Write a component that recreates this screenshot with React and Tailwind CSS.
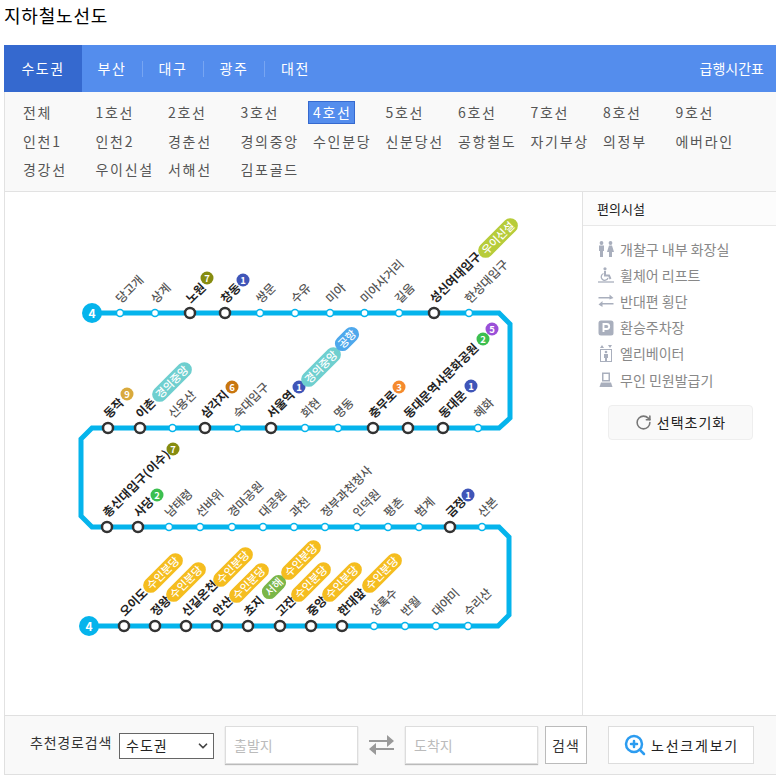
import { RotateCw, ZoomIn, ChevronDown } from 'lucide-react';

const tabs = ['부산', '대구', '광주', '대전'];

const lines = [
  '전체', '1호선', '2호선', '3호선', '4호선', '5호선', '6호선', '7호선', '8호선', '9호선',
  '인천1', '인천2', '경춘선', '경의중앙', '수인분당', '신분당선', '공항철도', '자기부상', '의정부', '에버라인',
  '경강선', '우이신설', '서해선', '김포골드',
];

const ROUTE = 'M92 313 H499 L510 324 V418 L499 428 H92 L81 439 V516 L92 527 H499 L509 537 V615 L498 626 H89';

// [name, x, transfer]
const rows = [
  { y: 313, stations: [['당고개', 120], ['상계', 155], ['노원', 190, 1], ['창동', 225, 1], ['쌍문', 260], ['수유', 295], ['미아', 330], ['미아사거리', 364.5], ['길음', 399], ['성신여대입구', 434, 1], ['한성대입구', 469]] },
  { y: 428, stations: [['동작', 108, 1], ['이촌', 140, 1], ['신용산', 172.5], ['삼각지', 205, 1], ['숙대입구', 237.5], ['서울역', 271, 1], ['회현', 305], ['명동', 338], ['충무로', 373, 1], ['동대문역사문화공원', 408, 1], ['동대문', 443, 1], ['혜화', 478]] },
  { y: 527, stations: [['총신대입구(이수)', 107, 1], ['사당', 138, 1], ['남태령', 169], ['선바위', 200], ['경마공원', 232], ['대공원', 263], ['과천', 294], ['정부과천청사', 325], ['인덕원', 357], ['평촌', 388], ['범계', 419], ['금정', 450, 1], ['산본', 482]] },
  { y: 626, stations: [['오이도', 124, 1], ['정왕', 155, 1], ['신길온천', 186, 1], ['안산', 217, 1], ['초지', 248, 1], ['고잔', 280, 1], ['중앙', 311, 1], ['한대앞', 342, 1], ['상록수', 374], ['반월', 405], ['대야미', 436], ['수리산', 468]] },
];

const dots = [
  ['7', 207, 278, '#868c10'], ['1', 243, 280, '#3f55b8'], ['2', 483, 339, '#3cbf50'], ['5', 492, 329, '#9a50d8'],
  ['9', 127, 394, '#d9aa3c'], ['6', 232, 387, '#c8760f'], ['1', 299, 387, '#3f55b8'], ['3', 399, 387, '#f58a2e'],
  ['1', 471, 386, '#3f55b8'], ['7', 173, 449, '#868c10'], ['2', 157, 495, '#3cbf50'], ['1', 468, 495, '#3f55b8'],
];

const pills = [
  ['우이신설', 498, 238, 50, '#b7cc3a'], ['경의중앙', 172, 382, 50, '#6fcfcf'], ['경의중앙', 321, 367, 50, '#6fcfcf'],
  ['공항', 347, 339, 28, '#4ea8ec'], ['수인분당', 163, 573, 50, '#f5bd1f'], ['수인분당', 186, 582, 50, '#f5bd1f'],
  ['수인분당', 233, 567, 50, '#f5bd1f'], ['수인분당', 249, 583, 50, '#f5bd1f'], ['서해', 274, 587, 28, '#7ab648'],
  ['수인분당', 301, 560, 50, '#f5bd1f'], ['수인분당', 311, 582, 50, '#f5bd1f'], ['수인분당', 342, 582, 50, '#f5bd1f'],
  ['수인분당', 382, 573, 50, '#f5bd1f'],
];

const facilities = [
  ['개찰구 내부 화장실', RestroomIcon],
  ['휠체어 리프트', WheelchairIcon],
  ['반대편 횡단', CrossIcon],
  ['환승주차장', ParkingIcon],
  ['엘리베이터', ElevatorIcon],
  ['무인 민원발급기', KioskIcon],
];

function RestroomIcon() {
  return (
    <svg width="16" height="16" viewBox="0 0 16 16" fill="#a9afbd">
      <circle cx="3.500" cy="2" r="1.900" />
      <circle cx="12.500" cy="2" r="1.900" />
      <path d="M1 4.500h5v5.500H5v6H2v-6H1z" />
      <path d="M11 4.500h3l2 6.500h-2v5h-3v-5H9z" />
    </svg>
  );
}

function WheelchairIcon() {
  return (
    <svg width="16" height="16" viewBox="0 0 16 16" fill="none" stroke="#a9afbd">
      <circle cx="7" cy="1.800" r="1.600" fill="#a9afbd" stroke="none" />
      <path d="M7 4v4.500h4l1.500 3.500" strokeWidth="2" />
      <path d="M5.500 6.500a3.500 3.500 0 1 0 4.500 4.500" strokeWidth="1.300" />
      <path d="M0 15h16" strokeWidth="1.300" />
    </svg>
  );
}

function CrossIcon() {
  return (
    <svg width="16" height="16" viewBox="0 0 16 16" fill="#a9afbd">
      <path d="M0.500 4h11V1.500L15.500 5l-4 1.500V5.500h-11z" />
      <path d="M15.500 10h-11V8L0.500 11.500 4.500 14v-2.500h11z" />
    </svg>
  );
}

function ParkingIcon() {
  return (
    <svg width="16" height="16" viewBox="0 0 16 16">
      <rect x="0.500" y="0.500" width="15" height="15" rx="2.500" fill="#a9afbd" />
      <path d="M5.500 12V4h3.200a2.400 2.400 0 0 1 0 5H5.500" fill="none" stroke="#fff" strokeWidth="1.900" />
    </svg>
  );
}

function ElevatorIcon() {
  return (
    <svg width="16" height="17" viewBox="0 0 16 17" fill="#a9afbd">
      <path d="M2 3l2-3 2 3zM10 0h4l-2 3z" />
      <rect x="2.500" y="4.500" width="11" height="12" fill="none" stroke="#a9afbd" />
      <circle cx="8" cy="7" r="1.300" />
      <path d="M6 9h4v4H9v3H7v-3H6z" />
    </svg>
  );
}

function KioskIcon() {
  return (
    <svg width="16" height="16" viewBox="0 0 16 16" fill="#a9afbd">
      <path d="M4 0.500h8v9H4z M5.500 2v6h5V2z" fillRule="evenodd" />
      <path d="M3 10.500h10l1.500 4.500h-13z" />
    </svg>
  );
}

function SubwayMap() {
  return (
    <svg width="577" height="522" viewBox="5 192 577 522" className="block">
      <path d={ROUTE} fill="none" stroke="#05b4ec" strokeWidth="5" />
      <circle cx="92" cy="313" r="10" fill="#05b4ec" />
      <text x="92" y="317.500" textAnchor="middle" fontSize="12" fontWeight="700" fill="#fff">4</text>
      <circle cx="89" cy="626" r="10" fill="#05b4ec" />
      <text x="89" y="630.500" textAnchor="middle" fontSize="12" fontWeight="700" fill="#fff">4</text>

      {rows.map((row) =>
        row.stations.map(([name, x, transfer]) => (
          <g key={name}>
            {transfer ? (
              <circle cx={x} cy={row.y} r="5" fill="#fff" stroke="#333" strokeWidth="2.500" />
            ) : (
              <circle cx={x} cy={row.y} r="3.500" fill="#fff" stroke="#05b4ec" strokeWidth="1.500" />
            )}
            <text
              x={x + 1}
              y={row.y - 9}
              transform={`rotate(-45 ${x + 1} ${row.y - 9})`}
              fontSize="12"
              fontWeight={transfer ? 700 : 500}
              letterSpacing={name.includes('(') ? 0.3 : 0}
              fill={transfer ? '#222' : '#555'}
            >
              {name}
            </text>
          </g>
        ))
      )}

      {dots.map(([label, x, y, color]) => (
        <g key={`${label}-${x}`}>
          <circle cx={x} cy={y} r="6.500" fill={color} />
          <text x={x} y={y + 3.500} textAnchor="middle" fontSize="9.500" fontWeight="700" fill="#fff">{label}</text>
        </g>
      ))}

      {pills.map(([label, x, y, len, color]) => (
        <g key={`${label}-${x}`} transform={`rotate(-45 ${x} ${y})`}>
          <rect x={x - len / 2} y={y - 7.500} width={len} height="15" rx="7.500" fill={color} />
          <text x={x} y={y + 4} textAnchor="middle" fontSize="11" fontWeight="500" fill="#fff">{label}</text>
        </g>
      ))}
    </svg>
  );
}

export default function App() {
  return (
    <div className="w-[776px] h-[779px] bg-white pl-1 font-['Noto_Sans_CJK_KR',sans-serif]">
      <h1 className="h-[45px] pt-[2px] text-[18px] leading-[26px] tracking-[0.8px] font-normal text-black">지하철노선도</h1>

      {/* Region tabs */}
      <div className="h-[47px] flex items-center bg-[#548ded] text-white text-[14px]">
        <div className="w-[78px] h-full flex items-center justify-center bg-[#3569cf] tracking-[1.500px]">수도권</div>
        {tabs.map((tab, i) => (
          <div
            key={tab}
            className={`w-[61px] h-4 flex items-center justify-center tracking-[1.500px] ${i < 3 ? 'border-r border-[#77a5f2]' : ''}`}
          >
            {tab}
          </div>
        ))}
        <div className="ml-auto pr-[12px]">급행시간표</div>
      </div>

      {/* Line picker */}
      <div className="h-[100px] bg-[#f9f9f9] border-l border-b border-[#e2e2e2] pl-[13px] pt-[9px] grid grid-cols-[repeat(10,72.500px)] auto-rows-[28.500px] text-[14px] text-[#555] tracking-[1.700px]">
        {lines.map((line) => (
          <div key={line}>
            <span
              className={`inline-block h-[23px] leading-[21px] px-[4px] border whitespace-nowrap ${
                line === '4호선' ? 'w-[47px] bg-[#548ded] border-[#3569cf] text-white' : 'border-transparent'
              }`}
            >
              {line}
            </span>
          </div>
        ))}
      </div>

      {/* Map + facilities */}
      <div className="h-[523px] flex border-l border-[#e2e2e2]">
        <div className="w-[577px] shrink-0 bg-white">
          <SubwayMap />
        </div>
        <aside className="flex-1 border-l border-[#e2e2e2]">
          <div className="h-[34px] border-b border-[#e8e8e8] bg-[#fcfcfc] pl-[14px] flex items-center text-[13px] text-[#222]">편의시설</div>
          <ul className="pt-[10px] pl-[15px] text-[14px] text-[#888]">
            {facilities.map(([label, Icon]) => (
              <li key={label} className="h-[26.200px] flex items-center gap-[6px] whitespace-nowrap">
                <Icon />
                {label}
              </li>
            ))}
          </ul>
          <button className="mt-[12px] ml-[25px] w-[145px] h-[35px] flex items-center justify-center gap-[5px] bg-[#f9f9f9] border border-[#eee] rounded text-[14px] text-[#222] tracking-[1px]">
            <RotateCw size={17} strokeWidth={2.200} className="text-[#777]" />
            선택초기화
          </button>
        </aside>
      </div>

      {/* Route search */}
      <div className="h-[60px] bg-[#f9f9f9] border border-r-0 border-[#e0e0e0] flex items-center pl-[25px] text-[14px]">
        <span className="w-[89px] text-[#333] tracking-[0.800px] whitespace-nowrap -mt-[6px]">추천경로검색</span>
        <div className="relative w-[95px] h-[26px] mt-[1px] border border-[#666] bg-white pl-[6px] flex items-center text-[#222] tracking-[1px]">
          수도권
          <ChevronDown size={14} strokeWidth={3} className="absolute right-[3px] top-[5px] text-[#444]" />
        </div>
        <input
          placeholder="출발지"
          className="ml-[11px] w-[133px] h-[38px] bg-white border border-[#ddd] shadow-[0_1px_1px_#bbb] px-2 placeholder:text-[#bbb]"
        />
        <svg width="25" height="20" viewBox="0 0 25 20" className="mx-[11px] -mt-[1px] shrink-0" fill="#999">
          <path d="M0 5h18V0l7 6-7 6V7H0z" />
          <path d="M25 13H7V8L0 14l7 6v-5h18z" />
        </svg>
        <input
          placeholder="도착지"
          className="w-[133px] h-[38px] bg-white border border-[#ddd] shadow-[0_1px_1px_#bbb] px-2 placeholder:text-[#bbb]"
        />
        <button className="ml-[7px] w-[42px] h-[38px] bg-white border border-[#bbb] text-[#333] tracking-[1px]">검색</button>
        <button className="ml-[21px] w-[146px] h-[38px] bg-white border border-[#ddd] flex items-center justify-center gap-[4px] text-[#222] tracking-[1.800px]">
          <ZoomIn size={24} strokeWidth={2.500} className="text-[#2c9cf0]" />
          노선크게보기
        </button>
      </div>
    </div>
  );
}
